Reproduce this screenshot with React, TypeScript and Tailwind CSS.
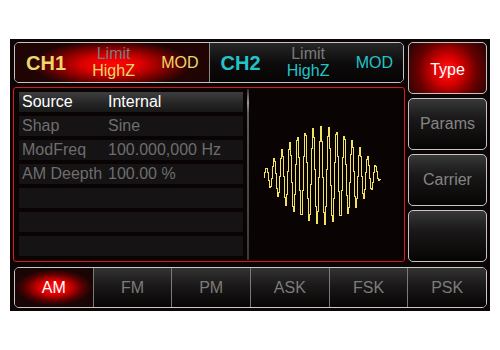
import React from 'react';

const rows = [
  { label: 'Source', value: 'Internal', active: true },
  { label: 'Shap', value: 'Sine' },
  { label: 'ModFreq', value: '100.000,000 Hz' },
  { label: 'AM Deepth', value: '100.00 %' },
  { label: '', value: '' },
  { label: '', value: '' },
  { label: '', value: '' },
];

const sideButtons = ['Params', 'Carrier', ''];
const tabs = ['AM', 'FM', 'PM', 'ASK', 'FSK', 'PSK'];

// AM waveform, drawn as small steps like the instrument's LCD
function buildWave() {
  const w = 116;
  const cx = 57;
  const cy = 52;
  const period = 7.8;
  let d = '';
  for (let x = 0; x <= w; x++) {
    const t = 0.03 + (x / w) * 0.94;
    const env = Math.sin(Math.PI * t) * 49;
    const y = Math.round(cy - env * Math.cos((2 * Math.PI * (x - cx)) / period)) + 0.5;
    d += x === 0 ? `M${x + 0.5} ${y}` : ` V${y} H${x + 0.5}`;
  }
  return d;
}
const wavePath = buildWave();

function Channel({ name, color, glow }: { name: string; color: string; glow?: boolean }) {
  return (
    <div
      className={`flex-1 flex items-center justify-between pl-[11px] pr-[10px] ${
        glow
          ? 'bg-[radial-gradient(ellipse_80px_24px_at_50%_55%,#ff0606_0%,#e00000_35%,#7a0000_70%,#200404_100%)]'
          : 'bg-[linear-gradient(#262626_0%,#0c0a0a_55%,#070404_100%)]'
      }`}
    >
      <span className={`text-[20px] font-bold leading-none ${color}`}>{name}</span>
      <div className="flex flex-col items-center text-[16px] leading-[17px] mt-[-1px]">
        <span className="text-[#7a7a7a]">Limit</span>
        <span className={color}>HighZ</span>
      </div>
      <span className={`text-[16px] leading-none ${color}`}>MOD</span>
    </div>
  );
}

export default function App() {
  return (
    <div className="w-[500px] h-[350px] bg-white pt-[39px] pl-[10px]" style={{ fontFamily: '"Liberation Sans", Arial, sans-serif' }}>
      <div className="w-[480px] h-[272px] bg-[#0b0505] flex flex-col pt-[3px] px-[3px]">
        <div className="flex gap-[3px]">
          {/* left column: channel header + menu panel */}
          <div className="w-[392px] flex flex-col gap-[4px]">
            <div className="mx-[1px] h-[41px] rounded-[5px] border border-[#c4c4c4] overflow-hidden flex">
              <Channel name="CH1" color="text-[#ead86c]" glow />
              <div className="w-px bg-[#8a8a8a]" />
              <Channel name="CH2" color="text-[#22c4c8]" />
            </div>
            <div className="h-[175px] rounded-[3px] border border-[#e2141c] bg-[#0a0303] flex">
              <div className="ml-[5px] mt-[4px] w-[224px] flex flex-col gap-[4px]">
                {rows.map((r, i) => (
                  <div
                    key={i}
                    className={`h-[20px] flex items-center text-[16px] leading-[20px] ${
                      r.active
                        ? 'bg-[linear-gradient(#3e3e3e_0%,#242424_60%,#181818_100%)] text-white'
                        : 'bg-[#151313] text-[#6e6e6e]'
                    }`}
                  >
                    <span className="w-[89px] pl-[3px] whitespace-nowrap">{r.label}</span>
                    <span className="whitespace-nowrap">{r.value}</span>
                  </div>
                ))}
              </div>
              <div className="ml-[4px] mt-[1px] mb-[1px] w-[2px] bg-[linear-gradient(#2a2a2a_0%,#9a9a9a_8%,#5a5a5a_14%,#3a3a3a_100%)]" />
              <div className="flex-1 flex items-center justify-center">
                <svg width="120" height="104" viewBox="0 0 120 104" className="ml-[-6px]">
                  <path d={wavePath} fill="none" stroke="#f2e25e" strokeWidth="1" shapeRendering="crispEdges" />
                </svg>
              </div>
            </div>
          </div>

          {/* right column: soft keys */}
          <div className="w-[79px] flex flex-col gap-[4px]">
            <div className="h-[52px] rounded-[5px] border border-[#c4c4c4] bg-[radial-gradient(circle_at_50%_55%,#ff1a1a_0%,#dd0000_28%,#6a0000_62%,#1e0606_100%)] flex items-center justify-center">
              <span className="text-[16px] text-white pt-[4px]">Type</span>
            </div>
            {sideButtons.map((b, i) => (
              <div
                key={i}
                className="h-[52px] rounded-[5px] border border-[#c4c4c4] bg-[linear-gradient(#383838_0%,#1a1818_40%,#070404_100%)] flex items-center justify-center"
              >
                <span className="text-[16px] text-[#858585]">{b}</span>
              </div>
            ))}
          </div>
        </div>

        {/* bottom tabs */}
        <div className="mt-[5px] ml-[1px] w-[473px] h-[41px] rounded-[5px] border border-[#c8c8c8] overflow-hidden flex">
          {tabs.map((t, i) => (
            <div
              key={t}
              className={`flex-1 flex items-center justify-center ${i > 0 ? 'border-l border-[#7a7a7a]' : ''} ${
                i === 0
                  ? 'bg-[radial-gradient(ellipse_38px_18px_at_50%_50%,#ff1010_0%,#d80000_40%,#5a0000_75%,#1a0505_100%)]'
                  : 'bg-[linear-gradient(#333333_0%,#1a1818_45%,#070404_100%)]'
              }`}
            >
              <span className={`text-[16px] ${i === 0 ? 'text-white' : 'text-[#7c7c7c]'}`}>{t}</span>
            </div>
          ))}
        </div>
      </div>
    </div>
  );
}
